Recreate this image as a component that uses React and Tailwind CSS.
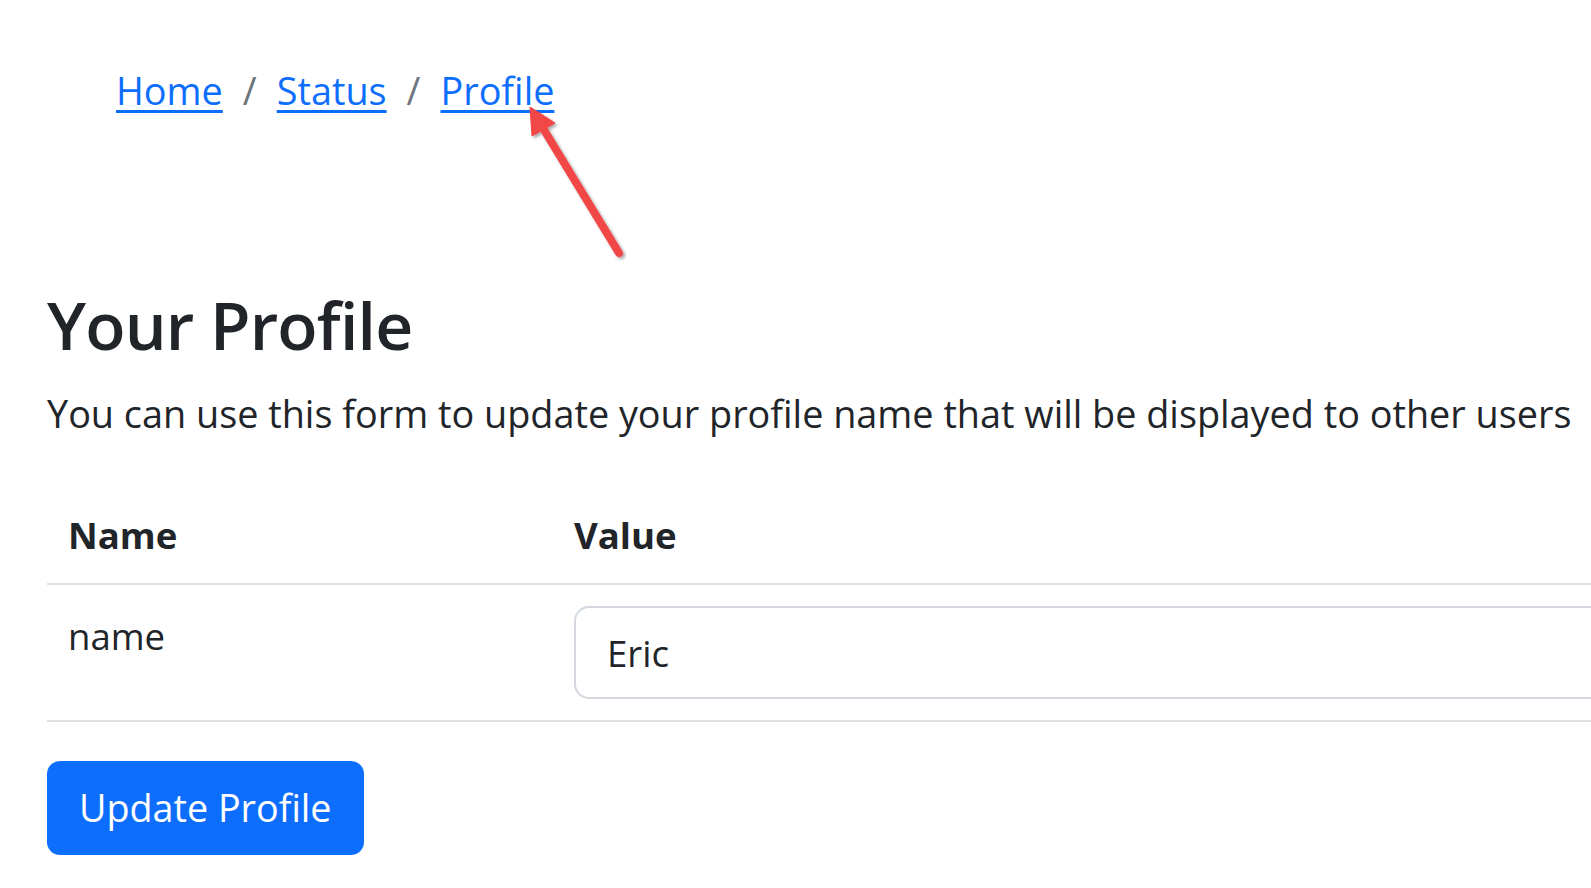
import React from "react";

function Arrow() {
  return (
    <svg
      className="absolute left-0 top-0 pointer-events-none"
      width="700"
      height="300"
      viewBox="0 0 700 300"
    >
      <defs>
        <filter id="arrowShadow" x="-20%" y="-20%" width="140%" height="140%">
          <feDropShadow dx="2" dy="2" stdDeviation="1.5" floodColor="#000" floodOpacity="0.35" />
        </filter>
      </defs>
      <g filter="url(#arrowShadow)" fill="#f24646" stroke="#f24646">
        <line x1="619" y1="253" x2="541" y2="125" strokeWidth="8" strokeLinecap="round" />
        <polygon points="530,107 555,123 532,136" strokeWidth="1" strokeLinejoin="round" />
      </g>
    </svg>
  );
}

export default function App() {
  return (
    <div
      className="relative w-[1591px] h-[888px] overflow-hidden bg-white text-[#212529]"
      style={{ fontFamily: '"Open Sans", "Noto Sans", sans-serif' }}
    >
      <div className="pl-[47px]">
        {/* breadcrumb */}
        <nav className="pt-[63px] pl-[69px] flex items-center gap-[20px] text-[37.8px] leading-[56px]">
          <a href="#" className="text-[#0d6efd] underline underline-offset-[5px] decoration-[3px]">
            Home
          </a>
          <span className="text-[#6c757d]">/</span>
          <a href="#" className="text-[#0d6efd] underline underline-offset-[5px] decoration-[3px]">
            Status
          </a>
          <span className="text-[#6c757d]">/</span>
          <a href="#" className="text-[#0d6efd] underline underline-offset-[5px] decoration-[3px]">
            Profile
          </a>
        </nav>

        <h1 className="mt-[163px] text-[66px] leading-[84px] font-semibold tracking-[-0.8px]">Your Profile</h1>
        <p className="mt-[20px] text-[37.8px] leading-[55px] whitespace-nowrap">
          You can use this form to update your profile name that will be displayed to other users
        </p>

        <table className="mt-[50px] w-[1700px] border-collapse text-[36.6px] leading-[54px]">
          <thead>
            <tr className="border-b-2 border-[#dee2e6]">
              <th className="w-[508px] px-[21px] pt-[17px] pb-[21px] text-left font-bold">Name</th>
              <th className="px-[19px] pt-[17px] pb-[21px] text-left font-bold">Value</th>
            </tr>
          </thead>
          <tbody>
            <tr className="border-b-2 border-[#dee2e6]">
              <td className="align-top px-[21px] pt-[24px] pb-[21px]">name</td>
              <td className="px-[19px] py-[21px]">
                <div className="h-[93px] flex items-center border-2 border-[#d3d8de] rounded-[15px] pl-[31px]">
                  Eric
                </div>
              </td>
            </tr>
          </tbody>
        </table>

        <button className="mt-[39px] h-[94px] px-[32px] rounded-[13px] bg-[#0d6efd] text-white text-[37.7px] leading-[54px]">
          Update Profile
        </button>
      </div>
      <Arrow />
    </div>
  );
}
